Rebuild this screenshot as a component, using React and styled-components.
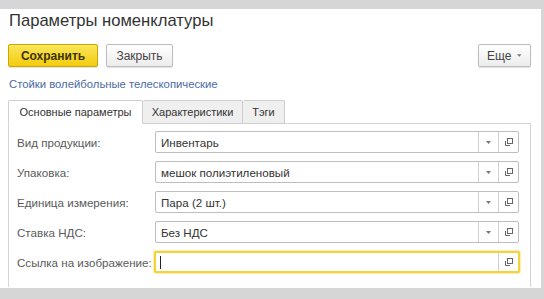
import React from 'react'
import styled, { createGlobalStyle } from 'styled-components'

const Global = createGlobalStyle`
  html, body {
    margin: 0;
    padding: 0;
    background: #d6d6d6;
    font-family: "Liberation Sans", Arial, sans-serif;
  }
`

const Page = styled.div`
  width: 544px;
  height: 299px;
  padding-top: 9px;
  box-sizing: border-box;
  overflow: hidden;
`

const Window = styled.div`
  width: 541px;
  height: 279px;
  background: #fff;
  padding: 2px 10px 0 8px;
  box-sizing: border-box;
  display: flex;
  flex-direction: column;
`

const Title = styled.h1`
  margin: 0 0 0 1px;
  font-size: 16.6px;
  line-height: 20px;
  font-weight: normal;
  color: #333;
`

const Toolbar = styled.div`
  display: flex;
  align-items: center;
  gap: 8px;
  margin-top: 13px;
  height: 23px;
`

const Button = styled.button`
  height: 23px;
  box-sizing: border-box;
  padding: 0 ${p => p.$pad || 14}px;
  font-family: "Liberation Sans", Arial, sans-serif;
  font-size: 12px;
  border-radius: 2px;
  display: flex;
  align-items: center;
  gap: 6px;
  color: ${p => (p.$primary ? '#3d3300' : '#444')};
  font-weight: ${p => (p.$primary ? 'bold' : 'normal')};
  border: 1px solid ${p => (p.$primary ? '#c9a600' : '#bdbdbd')};
  background: ${p =>
    p.$primary
      ? 'linear-gradient(#fbe55a, #f2cc0d)'
      : 'linear-gradient(#ffffff, #ececec)'};
  box-shadow: 0 1px 1px rgba(0, 0, 0, 0.12);
  width: ${p => (p.$w ? p.$w + 'px' : 'auto')};
  justify-content: center;
`

const Spacer = styled.div`
  flex: 1;
`

const Link = styled.a`
  margin: 9px 0 0 1px;
  font-size: 11.3px;
  line-height: 16px;
  color: #4a6aa5;
  text-decoration: none;
`

const Tabs = styled.div`
  display: flex;
  margin-top: 8px;
  height: 24px;
  position: relative;
  z-index: 1;
`

const Tab = styled.div`
  width: ${p => p.$w}px;
  height: 24px;
  box-sizing: border-box;
  display: flex;
  align-items: center;
  justify-content: center;
  font-size: 11px;
  color: #333;
  border: 1px solid #cfcfcf;
  border-left: ${p => (p.$first ? '1px solid #cfcfcf' : 'none')};
  border-bottom: ${p => (p.$active ? '1px solid #fff' : '1px solid #cfcfcf')};
  background: ${p => (p.$active ? '#fff' : '#efefef')};
  border-radius: 2px 2px 0 0;
`

const Panel = styled.div`
  width: 523px;
  height: 164px;
  box-sizing: border-box;
  margin-top: -1px;
  border: 1px solid #d4d4d4;
  border-bottom: none;
  padding: 7px 11px 0 8px;
  display: grid;
  grid-template-columns: 138px 364px;
  grid-auto-rows: 22px;
  row-gap: 8px;
  align-items: center;
`

const Label = styled.div`
  font-size: 11.6px;
  color: #5a5a5a;
  white-space: nowrap;
`

const Field = styled.div`
  height: 22px;
  box-sizing: border-box;
  display: flex;
  align-items: stretch;
  border: ${p => (p.$focus ? '2px solid #f3d23c' : '1px solid #bdbdbd')};
  box-shadow: ${p => (p.$focus ? '0 0 0 1px #fbeeb0' : 'none')};
  margin: ${p => (p.$focus ? '0 -1px' : '0')};
  border-radius: 2px;
  background: #fff;
`

const Value = styled.div`
  flex: 1;
  display: flex;
  align-items: center;
  padding-left: ${p => (p.$focus ? '4px' : '5px')};
  font-size: 11.6px;
  color: #333;
`

const Caret = styled.span`
  width: 1px;
  height: 13px;
  background: #222;
`

const Btn = styled.div`
  width: 19px;
  border-left: 1px solid #d0d0d0;
  display: flex;
  align-items: center;
  justify-content: center;
`

const Arrow = () => (
  <svg width="5" height="3" viewBox="0 0 5 3">
    <path d="M0 0h5L2.5 3z" fill="#777" />
  </svg>
)

const CopyIcon = () => (
  <svg width="10" height="10" viewBox="0 0 10 10">
    <rect x="3.5" y="1.5" width="5" height="5" fill="none" stroke="#666" strokeWidth="1" />
    <path d="M1.5 4v4.5H6" fill="none" stroke="#666" strokeWidth="1" />
  </svg>
)

const Row = ({ label, value, list = true, focus }) => (
  <>
    <Label>{label}</Label>
    <Field $focus={focus}>
      <Value $focus={focus}>{focus ? <Caret /> : value}</Value>
      {list && (
        <Btn>
          <Arrow />
        </Btn>
      )}
      <Btn>
        <CopyIcon />
      </Btn>
    </Field>
  </>
)

export default function App() {
  return (
    <Page>
      <Global />
      <Window>
        <Title>Параметры номенклатуры</Title>
        <Toolbar>
          <Button $primary $w={90}>Сохранить</Button>
          <Button $w={67}>Закрыть</Button>
          <Spacer />
          <Button $w={53} $pad={8}>
            Еще
            <Arrow />
          </Button>
        </Toolbar>
        <Link>Стойки волейбольные телескопические</Link>
        <Tabs>
          <Tab $active $first $w={135}>Основные параметры</Tab>
          <Tab $w={100}>Характеристики</Tab>
          <Tab $w={42}>Тэги</Tab>
        </Tabs>
        <Panel>
          <Row label="Вид продукции:" value="Инвентарь" />
          <Row label="Упаковка:" value="мешок полиэтиленовый" />
          <Row label="Единица измерения:" value="Пара (2 шт.)" />
          <Row label="Ставка НДС:" value="Без НДС" />
          <Row label="Ссылка на изображение:" list={false} focus />
        </Panel>
      </Window>
    </Page>
  )
}
